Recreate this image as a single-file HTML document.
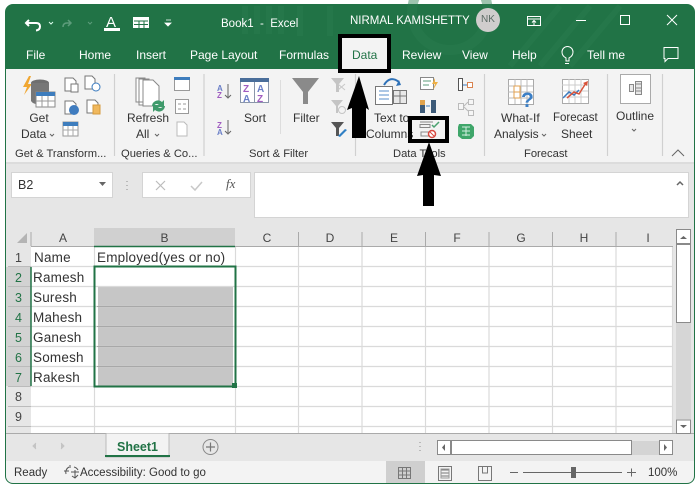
<!DOCTYPE html>
<html><head><meta charset="utf-8">
<style>
html,body{margin:0;padding:0;background:#fff}
#r{position:relative;width:700px;height:487px;overflow:hidden;background:#fff;font-family:"Liberation Sans",sans-serif;color:#333}
#r div{position:absolute}
.t{white-space:nowrap;line-height:14px;font-size:12px}
.w{color:#fff;font-size:12px;white-space:nowrap;line-height:14px;position:absolute}
.c{text-align:center}
.rh{left:6px;width:25px;text-align:center;font-size:12.5px;color:#444;line-height:20px;height:20px;background:#e6e6e6;white-space:nowrap}
.cell{left:33px;font-size:13.5px;letter-spacing:.2px;color:#333;line-height:20px;white-space:nowrap}
.ch{top:229px;height:18px;line-height:18px;text-align:center;font-size:12px;color:#444}
svg{position:absolute;left:0;top:0}
</style></head><body>
<div id="r">
<div style="left:5px;top:4px;width:690px;height:480px;border-radius:8px;background:#217346"></div>
<svg width="700" height="487" viewBox="0 0 700 487" fill="none">
<g stroke="#2b7d50" stroke-width="6" opacity=".45">
<path d="M245 6v28M257 6v28M269 6v28M281 6v28M300 6v30M330 6v30"/>
<circle cx="450" cy="12" r="38" stroke-width="10"/>
<path d="M560 6l-50 60M590 6l-50 60M620 6l-50 60"/>
</g>
</svg>
<div style="left:6px;top:69px;width:688px;height:93px;background:#f3f3f3"></div>
<div style="left:6px;top:162px;width:688px;height:272px;background:#e6e6e6"></div>
<div style="left:6px;top:162px;width:688px;height:2px;background:#dcdcdc"></div>
<div style="left:6px;top:434px;width:688px;height:27px;background:#e6e6e6"></div>
<div style="left:6px;top:461px;width:688px;height:22px;background:#f3f3f3;border-radius:0 0 7px 7px"></div>

<div class="w" style="left:221px;top:17px;font-size:11.5px">Book1&nbsp; -&nbsp; Excel</div>
<div class="w" style="left:350px;top:14px;font-size:11.5px">NIRMAL KAMISHETTY</div>
<div style="left:476px;top:8px;width:24px;height:24px;border-radius:12px;background:#d0cdcd;color:#5c6b65;font-size:10px;line-height:24px;text-align:center">NK</div>

<div class="w" style="left:26px;top:48px">File</div>
<div class="w" style="left:79px;top:48px">Home</div>
<div class="w" style="left:136px;top:48px">Insert</div>
<div class="w" style="left:190px;top:48px">Page Layout</div>
<div class="w" style="left:279px;top:48px">Formulas</div>
<div style="left:340px;top:37px;width:51px;height:35px;background:#f3f3f3"></div>
<div class="w" style="left:352px;top:48px;color:#217346">Data</div>
<div class="w" style="left:402px;top:48px">Review</div>
<div class="w" style="left:462px;top:48px">View</div>
<div class="w" style="left:512px;top:48px">Help</div>
<div class="w" style="left:587px;top:48px">Tell me</div>

<div class="t c" style="left:26px;top:111px;width:26px">Get</div>
<div class="t" style="left:21px;top:127px">Data</div>
<div class="t c" style="left:124px;top:111px;width:48px">Refresh</div>
<div class="t" style="left:136px;top:127px">All</div>
<div class="t" style="left:244px;top:111px">Sort</div>
<div class="t" style="left:293px;top:111px">Filter</div>
<div class="t" style="left:374px;top:111px">Text to</div>
<div class="t" style="left:366px;top:127px">Columns</div>
<div class="t" style="left:501px;top:111px">What-If</div>
<div class="t" style="left:553px;top:111px;font-size:11.5px">Forecast</div>
<div class="t" style="left:494px;top:127px">Analysis</div>
<div class="t" style="left:561px;top:127px">Sheet</div>
<div class="t" style="left:616px;top:109px">Outline</div>
<div class="t" style="left:15px;top:147px;font-size:11.2px">Get &amp; Transform...</div>
<div class="t" style="left:121px;top:147px;font-size:11.2px">Queries &amp; Co...</div>
<div class="t" style="left:249px;top:147px;font-size:11.2px">Sort &amp; Filter</div>
<div class="t" style="left:393px;top:147px;font-size:11.2px">Data Tools</div>
<div class="t" style="left:524px;top:147px;font-size:11.2px">Forecast</div>

<!-- formula bar -->
<div style="left:11px;top:172px;width:100px;height:24px;background:#fff;border:1px solid #d4d4d4"></div>
<div class="t" style="left:18px;top:178px;font-size:12.5px">B2</div>
<div style="left:142px;top:172px;width:107px;height:24px;background:#fff;border:1px solid #d4d4d4"></div>
<div style="left:254px;top:172px;width:433px;height:44px;background:#fff;border:1px solid #d4d4d4"></div>
<div style="left:226px;top:177px;font-family:'Liberation Serif',serif;font-style:italic;font-size:13px;color:#555;line-height:14px">fx</div>

<!-- grid -->
<div style="left:31px;top:247px;width:642px;height:187px;background:#fff"></div>
<div style="left:98px;top:287px;width:135px;height:99px;background:#c6c6c6"></div>
<div style="left:94px;top:228px;width:141px;height:19px;background:#d0d0d0"></div>
<div style="left:6px;top:267px;width:25px;height:119px;background:#d2d2d2"></div>

<svg width="700" height="487" viewBox="0 0 700 487" fill="none">
<!-- grid lines -->
<g stroke="#dadada" stroke-width="1.2">
<path d="M31 266.500H673M31 286.500H673M31 306.500H673M31 326.500H673M31 346.500H673M31 366.500H673M31 386.500H673M31 406.500H673M31 426.500H673"/>
<path d="M94.500 247V434M235.500 247V434M298.500 247V434M362 247V434M425.500 247V434M489 247V434M552.500 247V434M616 247V434M672.500 247V434"/>
</g>
<g stroke="#aaa" stroke-width="1"><path d="M31 298 M298.500 232V246M362 232V246M425.500 232V246M489 232V246M552.500 232V246M616 232V246M31 232V246"/>
<path d="M6 433.500H694"/><path d="M31 246.500H94M235 246.500H673"/></g>
<g stroke="#bbb"><path d="M8 266.500H31M8 286.500H31M8 306.500H31M8 326.500H31M8 346.500H31M8 366.500H31M8 386.500H31M8 406.500H31M8 426.500H31"/></g>
<g stroke="#a8a8a8"><path d="M97 306.500H233M97 326.500H233M97 346.500H233M97 366.500H233"/></g>
<path d="M17 243L27 233V243Z" fill="#b4b4b4"/>
<path d="M94 246.500H235" stroke="#217346" stroke-width="1.500"/>
<path d="M31 267V386" stroke="#217346" stroke-width="1.500"/>
<rect x="94.500" y="266.500" width="141" height="120" stroke="#217346" stroke-width="2"/>
<rect x="232" y="383" width="5" height="5" fill="#217346"/>

<!-- QAT -->
<path d="M29 20l-3 3 3 3M27 23h9q4 0 4 3.500t-4 4" stroke="#fff" stroke-width="2"/>
<path d="M49 22l2 2 2-2" stroke="#dfe" />
<path d="M68 20l3 3-3 3M70 23h-3q-4 0-4 4" stroke="#5d9c7b" stroke-width="1.500"/>
<path d="M88 22l2 2 2-2" stroke="#5d9c7b"/>
<text x="106" y="27" fill="#fff" font-family="Liberation Sans" font-size="15" style="text-decoration:none">A</text>
<rect x="104" y="28" width="16" height="3" fill="#fff"/>
<path d="M133 17h16v11h-16z" fill="#fff"/><path d="M134 21h14M134 24.500h14M139 21v7M144 21v7" stroke="#217346"/>
<path d="M166 20h5M165 23h6l-3 3z" fill="#fff" stroke="#fff" stroke-width=".8"/>

<!-- window controls -->
<rect x="527.500" y="16.500" width="13" height="9" stroke="#fff"/><path d="M527 19h14M534 25v-4M532 22.500l2-2 2 2" stroke="#fff"/>
<path d="M576 20.500h10" stroke="#fff"/>
<rect x="620.500" y="15.500" width="9" height="9" stroke="#fff"/>
<path d="M667 15l10 10M677 15l-10 10" stroke="#fff"/>
<!-- tell me bulb -->
<path d="M565 61v-3q-4-2-4-6a5.500 5.500 0 0 1 11 0q0 4-4 6v3z" stroke="#fff" transform="translate(1 0)"/>
<path d="M565 63.500h4" stroke="#fff"/>
<!-- comment -->
<path d="M664.500 47.500h14v11h-10l-3 3v-3h-1z" stroke="#fff" transform="translate(-.5 0)"/>

<!-- group separators -->
<g stroke="#d0d0d0" stroke-width="1.200"><path d="M114.500 74V156M204 74V156M355.500 74V156M484.500 74V156M607.500 74V156M662.500 74V156"/></g>
<path d="M280.500 80V134" stroke="#ddd"/>

<!-- Get Data icon -->
<path d="M29 76l-6 11h4l-3 8 8-11h-4l3-8z" fill="#f0a732"/>
<ellipse cx="40" cy="83" rx="9" ry="3.500" fill="#6f6f6f"/>
<path d="M31 83v18q2 3 6 3V93h12V83z" fill="#777"/>
<rect x="36" y="92" width="19" height="15" fill="#fff" stroke="#8a8a8a"/><rect x="36" y="92" width="19" height="4" fill="#3e7dbd"/>
<path d="M36 101h19M42 96v11M48 96v11" stroke="#999"/>
<!-- small page icons -->
<g stroke="#777" fill="#fff">
<path d="M65 78h8l3 3v10H65z"/><rect x="71" y="84" width="7" height="8"/>
<path d="M85 76h7l3 3v10H85z"/><circle cx="96" cy="87" r="4" stroke="#3b7bbf"/>
<path d="M65 101h8l3 3v10H65z"/><circle cx="74" cy="110" r="4.500" fill="#3f7cbf" stroke="#3f7cbf"/>
<path d="M87 100h8l3 3v10H87z"/><rect x="93" y="105" width="7" height="9" fill="#f0b85d" stroke="#d59a3c"/>
<rect x="63" y="122" width="15" height="14" stroke="#999"/>
</g>
<rect x="63" y="122" width="15" height="4" fill="#3e7dbd"/>
<path d="M63 130h15M68 126v10M73 126v10" stroke="#aaa"/>
<!-- Refresh -->
<g stroke="#888" fill="#fff">
<path d="M136 78h9v24h-9zM139 79h10v26h-10z"/><path d="M143 80h10l6 6v20h-16z"/>
</g>
<path d="M152 106a6 6 0 0 1 10-4l2-2v7h-7l2-2a3 3 0 0 0-5 1zM165 106a6 6 0 0 1-10 4l-2 2v-7h7l-2 2a3 3 0 0 0 5-1z" fill="#3f9a6b"/>
<g stroke="#999" fill="#fff">
<rect x="174.500" y="77.500" width="15" height="13"/>
<rect x="175.500" y="99.500" width="13" height="14"/>
<path d="M177 122h7l3 3v11h-10z" stroke="#bbb"/>
</g>
<rect x="174" y="77" width="16" height="3" fill="#3e7dbd"/>
<path d="M178 104h3M178 109h3M183 104h3M183 109h3" stroke="#999"/>
<!-- Sort icons -->
<text x="217" y="91" font-family="Liberation Sans" font-size="8" font-weight="bold" fill="#6a7fc7">A</text>
<text x="217" y="98" font-family="Liberation Sans" font-size="8" font-weight="bold" fill="#a05cc0">Z</text>
<path d="M228 84v13M225 95l3 3 3-3" stroke="#666"/>
<text x="217" y="128" font-family="Liberation Sans" font-size="8" font-weight="bold" fill="#a05cc0">Z</text>
<text x="217" y="135" font-family="Liberation Sans" font-size="8" font-weight="bold" fill="#6a7fc7">A</text>
<path d="M228 120v13M225 131l3 3 3-3" stroke="#666"/>
<rect x="240.500" y="79.500" width="28" height="23" fill="#fff" stroke="#8a96aa"/>
<rect x="240" y="78" width="29" height="4" fill="#4a6e9a"/><path d="M254.500 82v21" stroke="#8a96aa"/>
<text x="243" y="92" font-family="Liberation Sans" font-size="10" font-weight="bold" fill="#a05cc0">Z</text>
<text x="257" y="92" font-family="Liberation Sans" font-size="10" font-weight="bold" fill="#6a7fc7">A</text>
<text x="243" y="102" font-family="Liberation Sans" font-size="10" font-weight="bold" fill="#6a7fc7">A</text>
<text x="257" y="102" font-family="Liberation Sans" font-size="10" font-weight="bold" fill="#a05cc0">Z</text>
<!-- Filter -->
<path d="M292 78h27l-11 14v12h-5V92z" fill="#8a8a8a"/>
<path d="M331 78h13l-5 6v8h-3v-8z" fill="#c4c4c4"/><path d="M338 84l7 6M345 84l-7 6" stroke="#c8c8c8"/>
<path d="M331 100h12l-5 6v7h-2v-7z" fill="#c4c4c4"/><circle cx="342" cy="110" r="3.500" stroke="#c4c4c4"/>
<path d="M331 122h13l-5 6v8h-3v-8z" fill="#555"/><path d="M338 136l7-7 2 1-7 7z" fill="#2f7fc4"/>

<!-- text to columns -->
<rect x="375.500" y="86.500" width="17" height="18" fill="#fff" stroke="#777"/>
<path d="M379 91h10M379 95h10M379 99h10" stroke="#5a8fcb"/>
<rect x="393.500" y="90.500" width="13" height="13" fill="#e8e8e8" stroke="#777"/>
<path d="M400 91v12M394 96h12" stroke="#777"/>
<path d="M384 85q6-10 15-3" stroke="#2f72b8" stroke-width="2"/><path d="M396 86l5-1-2-5z" fill="#2f72b8"/>
<!-- data tools small -->
<rect x="420.500" y="77.500" width="13" height="12" fill="#fff" stroke="#888"/><path d="M423 81h8M423 85h6" stroke="#5d9c7b"/><path d="M435 78l-3 6h3l-2 6 5-8h-3z" fill="#eeb045"/>
<rect x="420" y="100" width="5" height="13" fill="#3c5a78"/><rect x="431" y="100" width="5" height="13" fill="#3c5a78"/><rect x="420" y="100" width="5" height="5" fill="#e0a24c"/><path d="M426 106h4" stroke="#3b7bbf"/>
<g stroke="#555"><rect x="458.500" y="78.500" width="4" height="12" fill="#fff"/></g><rect x="467.500" y="82.500" width="5" height="5" stroke="#d9824f" fill="#fff"/><path d="M463 85h4" stroke="#3b7bbf"/>
<g stroke="#bbb" fill="#f6f6f6"><rect x="458.500" y="103.500" width="5" height="6"/><rect x="468.500" y="99.500" width="5" height="5"/><rect x="468.500" y="110.500" width="5" height="5"/><path d="M464 106l4-4M464 107l4 4"/></g>
<path d="M459 124h12l3 3v9l-3 3h-9l-4-3v-9z" fill="#3fa66a"/><path d="M462 127h8M462 131h8M462 135h8M466 127v9" stroke="#d3efe0"/>
<!-- data validation -->
<path d="M420 122h13M420 124.500h10v3h-10zM421 132h12v4h-12z" stroke="#888"/>
<path d="M432 125l2 2 5-5" stroke="#4aa16f" stroke-width="1.500"/>
<circle cx="432" cy="134" r="3.500" stroke="#d8483f" stroke-width="1.500" fill="#fff"/><path d="M430 132l4 4" stroke="#d8483f"/>

<!-- What-if -->
<rect x="508.500" y="79.500" width="25" height="25" fill="#fff" stroke="#aaa"/>
<path d="M508 86h25M508 92h25M508 98h25M515 79v25M521 79v25M527 79v25" stroke="#bbb"/>
<rect x="514" y="86" width="6" height="6" fill="#fff" stroke="#e2a04f"/><rect x="514" y="92" width="6" height="6" fill="#fff" stroke="#e2a04f"/>
<text x="521" y="107" font-family="Liberation Sans" font-size="21" font-weight="bold" fill="#3b7fc6">?</text>
<!-- Forecast sheet -->
<rect x="562.500" y="79.500" width="26" height="24" fill="#fff" stroke="#aaa"/>
<path d="M562 85h26M562 91h26M562 97h26M569 79v24M575 79v24M581 79v24" stroke="#ccc"/>
<path d="M563 98l6-6 5 3 5-5" stroke="#3b7bbf" stroke-width="1.500"/>
<path d="M567 98l7-6 5 2 7-11" stroke="#d8533a" stroke-width="1.500"/><path d="M583 83l5-2-1 5z" fill="#d8533a"/>
<!-- Outline -->
<rect x="620.500" y="74.500" width="30" height="29" fill="#fff" stroke="#aaa"/>
<g stroke="#888" fill="#e8e8e8"><rect x="629.500" y="84.500" width="4" height="7"/><rect x="635.500" y="81.500" width="6" height="13"/></g>
<path d="M635 84h7M635 88h7M635 91h7" stroke="#888"/>
<path d="M632 129l2 2 2-2" stroke="#666"/>
<!-- dropdown chevrons -->
<path d="M50 134l2 2 2-2M155 134l2 2 2-2M542 134l2 2 2-2" stroke="#666"/>
<path d="M672 156l6-6 6 6" stroke="#666"/>

<!-- formula bar marks -->
<path d="M99 182h7l-3.500 4z" fill="#666"/>
<path d="M127 181v1M127 185v1M127 189v1" stroke="#aaa" stroke-width="1.500"/>
<path d="M156 181l9 9M165 181l-9 9" stroke="#bcbcbc" stroke-width="1.200"/>
<path d="M191 186l4 4 7-8" stroke="#c8c8c8" stroke-width="1.500"/>
<path d="M677 185l3-3 3 3" stroke="#666" stroke-width="1.500"/>

<!-- scrollbar -->
<rect x="676.500" y="229.500" width="14" height="14" fill="#fff" stroke="#8a8a8a"/><path d="M680 239h7l-3.500-3z" fill="#666"/>
<rect x="676.500" y="244.500" width="14" height="78" fill="#fff" stroke="#8a8a8a"/>
<rect x="676" y="323" width="15" height="96" fill="#d6d6d6"/>
<rect x="676.500" y="420" width="14" height="13.500" fill="#fff" stroke="#8a8a8a"/><path d="M680 425h7l-3.500 3z" fill="#666"/>

<!-- tab bar -->
<path d="M36 443l-3 3 3 3" stroke="#c4c4c4" fill="#c4c4c4"/><path d="M61 443l3 3-3 3" stroke="#c4c4c4" fill="#c4c4c4"/>
<path d="M106 433.500V457H169V433.500" fill="#f3f3f3" stroke="#bbb"/>
<rect x="105" y="455" width="65" height="2" fill="#217346"/>
<circle cx="210.500" cy="447" r="7.500" stroke="#888" fill="#e6e6e6"/><path d="M206 447h9M210.500 442.500v9" stroke="#777" stroke-width="1.200"/>
<path d="M420 442v1M420 446v1M420 450v1" stroke="#aaa" stroke-width="1.500"/>
<rect x="437.500" y="440.500" width="13" height="14" fill="#fff" stroke="#8a8a8a"/><path d="M445 444v7l-3-3.500z" fill="#666"/>
<rect x="451.500" y="440.500" width="180" height="14" fill="#fff" stroke="#8a8a8a"/>
<rect x="632" y="441" width="27" height="14" fill="#d4d4d4"/>
<rect x="659.500" y="440.500" width="13" height="14" fill="#fff" stroke="#8a8a8a"/><path d="M664 444v7l3-3.500z" fill="#666"/>

<!-- status -->
<path d="M66 474a6 6 0 0 1 3-7M74 467a6 6 0 0 1 4 3M70 465v3M64 471h5M72 476l3 2 3-3M75 470v8M71 472h8" stroke="#555"/>
<rect x="386" y="461" width="39" height="22" fill="#cfcfcf"/>
<rect x="398.500" y="467.500" width="12" height="11" stroke="#777"/><path d="M398 471h13M398 475h13M402.500 467v12M406.500 467v12" stroke="#777"/>
<rect x="438.500" y="466.500" width="13" height="14" stroke="#777"/><path d="M441 470h8M441 473h8M441 476h8" stroke="#777"/><rect x="441" y="469" width="8" height="9" stroke="#999"/>
<path d="M478.500 480.500v-14h13v14zM482.500 467v6h5v-6" stroke="#777"/>
<path d="M510 472.500h8M523 472.500h99M627 472.500h9M631.500 468.500v8" stroke="#666"/>
<rect x="571" y="467" width="5" height="11" fill="#666"/>

<!-- annotation overlay -->
<rect x="340" y="36" width="49" height="35" stroke="#000" stroke-width="4"/>
<rect x="410" y="118" width="37" height="23" stroke="#000" stroke-width="4"/>
<path d="M359 76L369 110L366 108V138H352V108L347 110Z" fill="#000"/>
<path d="M429 142L441 176L434 175V206H423V175L417 176Z" fill="#000"/>
</svg>

<!-- column headers -->
<div class="ch" style="left:31px;width:64px">A</div>
<div class="ch" style="left:94px;width:141px">B</div>
<div class="ch" style="left:235px;width:64px">C</div>
<div class="ch" style="left:298px;width:64px">D</div>
<div class="ch" style="left:362px;width:64px">E</div>
<div class="ch" style="left:425px;width:64px">F</div>
<div class="ch" style="left:489px;width:64px">G</div>
<div class="ch" style="left:552px;width:64px">H</div>
<div class="ch" style="left:616px;width:64px">I</div>

<!-- row headers & cells -->
<div class="rh" style="top:248px;color:#444;background:none">1</div>
<div class="rh" style="top:268px;color:#217346;background:none">2</div>
<div class="rh" style="top:288px;color:#217346;background:none">3</div>
<div class="rh" style="top:308px;color:#217346;background:none">4</div>
<div class="rh" style="top:328px;color:#217346;background:none">5</div>
<div class="rh" style="top:348px;color:#217346;background:none">6</div>
<div class="rh" style="top:368px;color:#217346;background:none">7</div>
<div class="rh" style="top:387px;background:none">8</div>
<div class="rh" style="top:407px;background:none">9</div>
<div class="cell" style="top:248px;left:34px">Name</div>
<div class="cell" style="top:268px">Ramesh</div>
<div class="cell" style="top:288px">Suresh</div>
<div class="cell" style="top:308px">Mahesh</div>
<div class="cell" style="top:328px">Ganesh</div>
<div class="cell" style="top:348px">Somesh</div>
<div class="cell" style="top:368px">Rakesh</div>
<div class="cell" style="top:248px;left:97px">Employed(yes or no)</div>

<div class="t" style="left:117px;top:440px;font-weight:bold;font-size:12.5px;color:#217346">Sheet1</div>
<div class="t" style="left:14px;top:466px;font-size:11.5px">Ready</div>
<div class="t" style="left:80px;top:466px;font-size:11.5px">Accessibility: Good to go</div>
<div class="t" style="left:648px;top:466px;font-size:11.5px">100%</div>
</div>
</body></html>
